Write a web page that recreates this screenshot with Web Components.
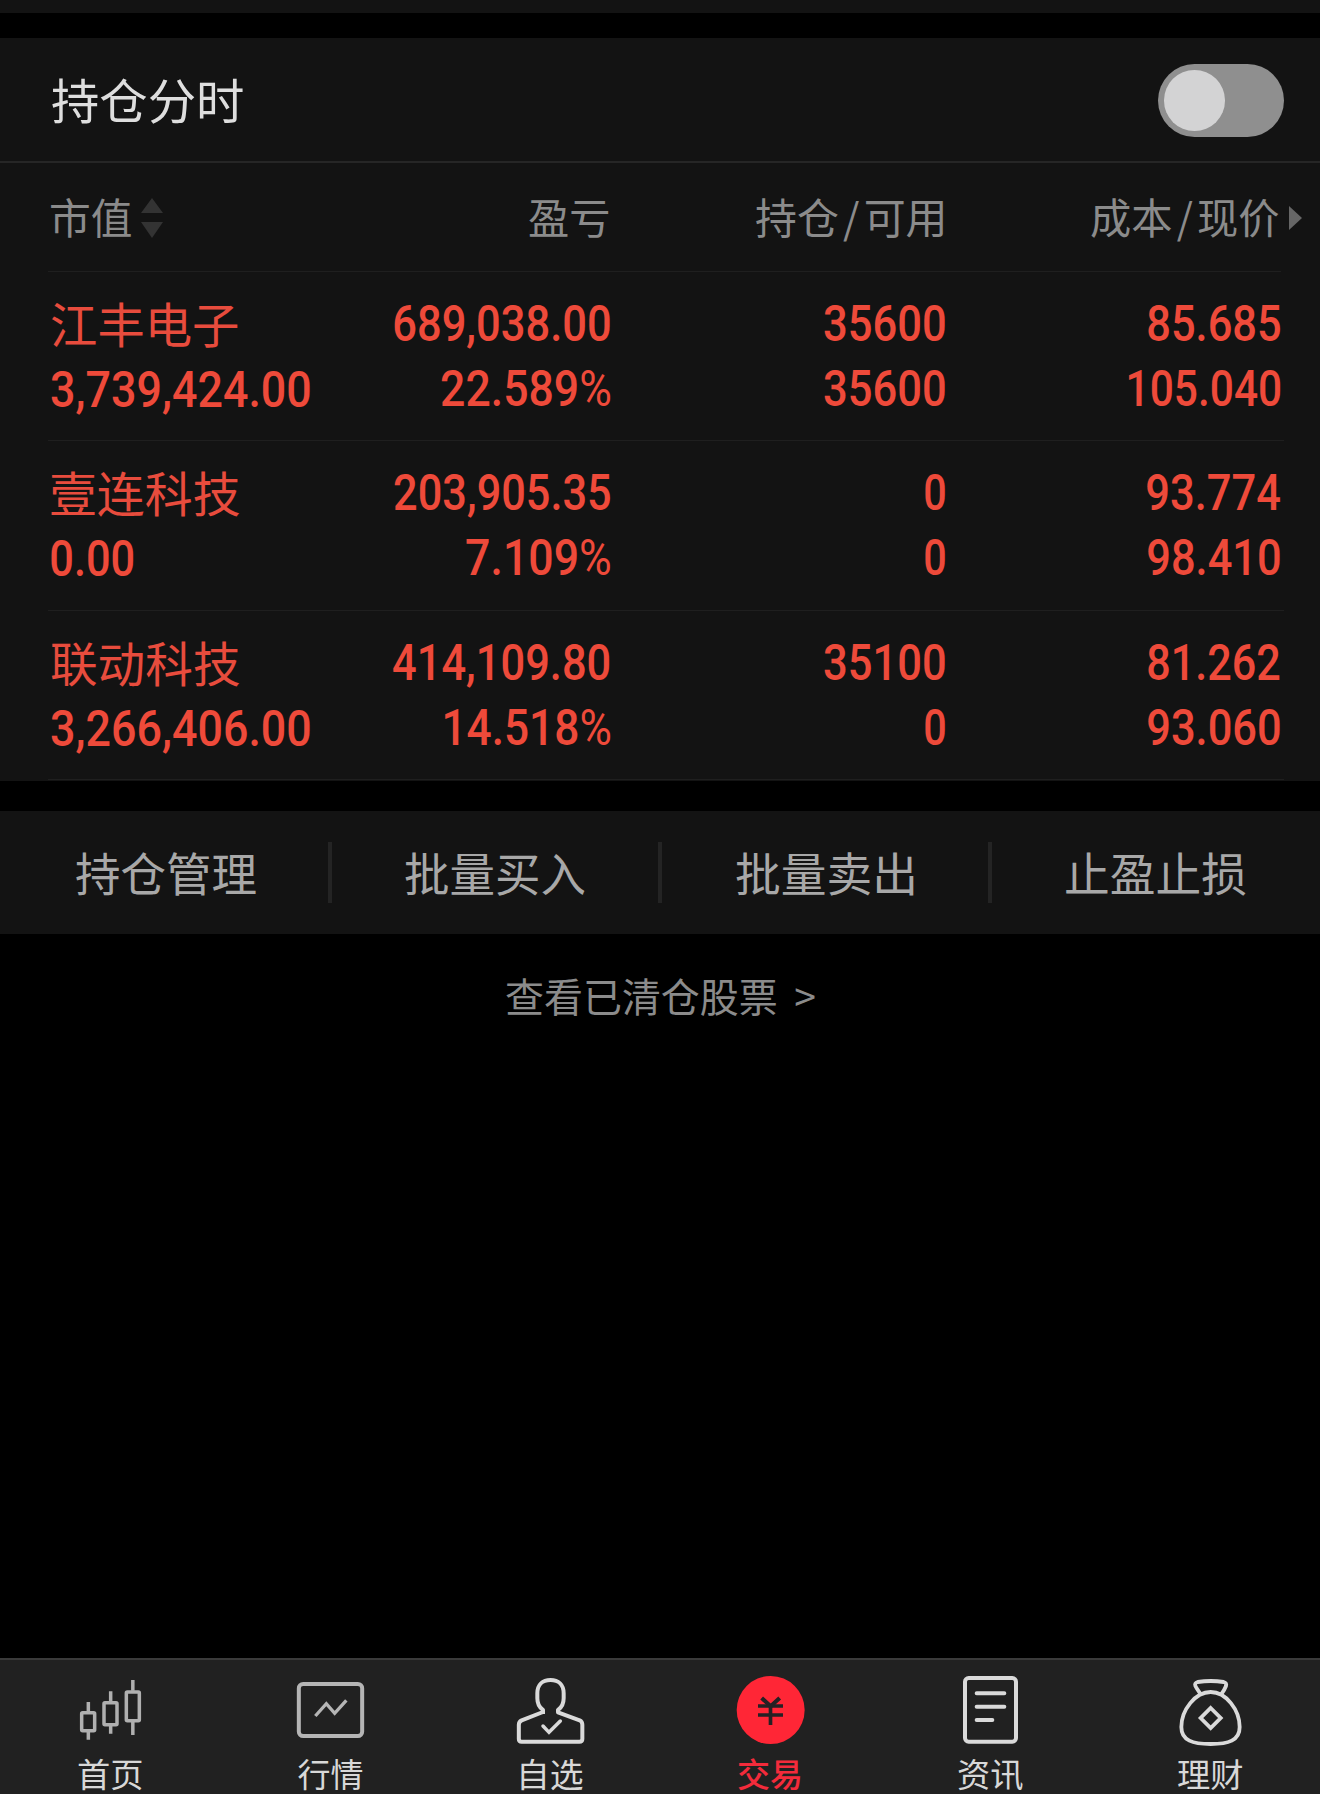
<!DOCTYPE html>
<html lang="zh-CN">
<head>
<meta charset="utf-8">
<title>持仓</title>
<style>
  html, body { margin: 0; background: #000; }
  body { width: 1320px; height: 1794px; overflow: hidden; }
</style>
</head>
<body>
<trade-page></trade-page>

<script>
const CJK = '"Noto Sans CJK SC", sans-serif';

/* One line of text whose drawn glyphs span exactly `w` pixels. */
class FitText extends HTMLElement {
  connectedCallback() {
    const w = parseFloat(this.getAttribute('w'));
    const text = this.getAttribute('text');
    const root = this.attachShadow({ mode: 'open' });
    root.innerHTML = `<style>
      :host { display: block; width: ${w}px; white-space: pre; flex: none; }
      .line { display: inline-block; transform-origin: 0 50%; }
      .slash { margin: 0 0.1em; }
      .more { margin-left: 0.2em; }
      .pct { font-weight: 400; }
    </style><span class="line"></span>`;
    const line = root.querySelector('.line');
    const marks = { '/': 'slash', '>': 'more', '%': 'pct' };
    for (const part of text.split(/([/>%])/).filter(Boolean)) {
      if (marks[part]) {
        const s = document.createElement('span');
        s.className = marks[part];
        s.textContent = part;
        line.append(s);
      } else line.append(part);
    }
    const cs = getComputedStyle(this);
    const ctx = document.createElement('canvas').getContext('2d');
    const measure = ch => {
      ctx.font = `${ch === '%' ? 400 : cs.fontWeight} ${cs.fontSize} ${cs.fontFamily}`;
      return ctx.measureText(ch);
    };
    const first = measure(text[0]), last = measure(text[text.length - 1]);
    const left = -first.actualBoundingBoxLeft;
    const right = last.width - last.actualBoundingBoxRight;
    const k = w / (line.getBoundingClientRect().width - left - right);
    line.style.transform = `translateX(${-left * k}px) scaleX(${k})`;
  }
}

class ToggleSwitch extends HTMLElement {
  connectedCallback() {
    this.attachShadow({ mode: 'open' }).innerHTML = `<style>
      :host { display: flex; align-items: center; box-sizing: border-box; width: 126px; height: 73px;
        padding-left: 6px; border-radius: 37px; background: #8f8f8f; }
      i { display: block; width: 61.5px; height: 61px; border-radius: 50%; background: #d3d3d4; }
    </style><i></i>`;
  }
}

class PositionHeader extends HTMLElement {
  connectedCallback() {
    this.attachShadow({ mode: 'open' }).innerHTML = `<style>
      :host { display: grid; grid-template-columns: 200px 358px 333.5px 336.5px 1fr; box-sizing: border-box;
        height: 109px; padding-left: 51px; align-items: center; color: #8b8b8b;
        font: 400 41.5px/60px ${CJK}; }
      div { display: flex; justify-content: flex-end; align-items: center; padding-bottom: 4px; }
      .first { justify-content: flex-start; gap: 10px; }
      svg { display: block; margin-top: 5px; }
      .more { justify-content: flex-start; padding-left: 10px; }
    </style>
    <div class="first"><fit-text w="80" text="市值"></fit-text>
      <svg width="22" height="40" viewBox="0 0 22 40" fill="#333"><path d="M11 0L22 15H0zM11 40L0 24H22z"/></svg></div>
    <div><fit-text w="80" text="盈亏"></fit-text></div>
    <div><fit-text w="187" text="持仓/可用"></fit-text></div>
    <div><fit-text w="188" text="成本/现价"></fit-text></div>
    <div class="more"><svg width="13" height="24" viewBox="0 0 13 24" fill="#666"><path d="M0 0L13 12L0 24z"/></svg></div>`;
  }
}

class PositionRow extends HTMLElement {
  connectedCallback() {
    const cells = this.getAttribute('cells').split(';').map(c => c.split('|'));
    const fit = ([text, w, cls]) => `<fit-text class="${cls || ''}" w="${w}" text="${text}"></fit-text>`;
    this.attachShadow({ mode: 'open' }).innerHTML = `<style>
      :host { display: grid; grid-template-columns: 200px 358.5px 335.5px 335px; box-sizing: border-box;
        height: 169.33px; padding: 20px 0 0 51px; color: #ee4a3a;
        font: 500 49.2px/65px Roboto, sans-serif; 
        background: linear-gradient(#1f1f1f, #1f1f1f) 48px 100% / 1236px 1px no-repeat; }
      div { display: flex; flex-direction: column; align-items: flex-end; }
      div:first-of-type { align-items: flex-start; }
      .name { font: 400 47.5px/65px ${CJK}; color: #e84c3d; margin: -2px 0 3px; }
    </style>` + [0, 2, 4, 6].map(i => `<div>${fit(cells[i])}${fit(cells[i + 1])}</div>`).join('');
  }
}

class ActionBar extends HTMLElement {
  connectedCallback() {
    this.attachShadow({ mode: 'open' }).innerHTML = `<style>
      :host { display: grid; grid-template-columns: 328px 4px 326px 4px 326px 4px 328px; height: 123px;
        align-items: center; justify-items: center; background: #131313; color: #a8a8a8;
        font: 400 46px/66px ${CJK}; }
      fit-text { margin-bottom: 4px; }
      fit-text:first-of-type { margin-left: 3px; }
      i { width: 4px; height: 61px; background: #242424; }
    </style>
    <fit-text w="180" text="持仓管理"></fit-text><i></i>
    <fit-text w="180" text="批量买入"></fit-text><i></i>
    <fit-text w="178" text="批量卖出"></fit-text><i></i>
    <fit-text w="180" text="止盈止损"></fit-text>`;
  }
}

/* Each drawing uses thirds of a pixel: a 660-unit wide tab is 220px. */
const ICONS = {
  home: `<g stroke="#b0b0b0" stroke-width="10.5"><rect x="245" y="218" width="39" height="54" rx="3"/><path d="M265 186V214M265 276V299"/>
    <rect x="312" y="188" width="39" height="66" rx="3"/><path d="M332 154V184M332 258V281"/>
    <rect x="379" y="156" width="39" height="86" rx="3"/><path d="M398.500 120V152M398.500 246V285"/></g>`,
  market: `<g transform="translate(-660)" stroke="#b5b5b5"><rect x="896.500" y="132" width="190" height="156" rx="13" stroke-width="12"/>
    <path d="M946 228L979 191L1004 220L1039 181" stroke-width="10"/></g>`,
  watch: `<g stroke="#dadada" stroke-width="12" stroke-linejoin="round"><path d="M309 222V210C297 202 292 190 292 175V160C292 134 308 120 331.500 120C355 120 371 134 371 160V175C371 190 366 202 354 210V217L419 241Q427 245 427 254V297Q427 305.500 418 305.500H245Q236.500 305.500 236.500 297V254Q236.500 245 245 241L309 216"/>
    <path d="M309 258L327 277L361 243" stroke-width="10.500" stroke-linecap="round" stroke-linejoin="miter"/></g>`,
  trade: `<circle cx="332" cy="210" r="102" fill="#ff2636"/><g stroke="#242124" stroke-width="11"><path d="M305 174L332 199L359 174" stroke-width="12"/><path d="M294 198H369M294 225H369M331.500 195V255"/></g>`,
  news: `<g stroke="#dadada" stroke-width="12"><rect x="255" y="114" width="153" height="191" rx="11"/><path d="M290 160H373M290 200H373M290 240H337" stroke-linecap="round"/></g>`,
  wealth: `<g transform="translate(-660)" stroke="#dadada" stroke-width="11.500"><path d="M963 163C956 154 950 146 946 137Q943 129 953 126Q992 120 1031 126Q1041 129 1038 138Q1033 151 1023 164"/>
    <path d="M992 156C1038 156 1079 210 1079 261C1079 302 1045 312 992 312C939 312 904 302 904 261C904 210 946 156 992 156Z"/>
    <path d="M992 204L1022 234L992 264L962 234Z"/></g>`
};

class TabItem extends HTMLElement {
  connectedCallback() {
    const active = this.hasAttribute('active');
    this.attachShadow({ mode: 'open' }).innerHTML = `<style>
      :host { display: flex; flex-direction: column; align-items: center; width: 220px;
        font: ${active ? 500 : 400} 33px/44px ${CJK}; color: ${active ? '#f42b3b' : '#d8d8d8'}; }
      svg { display: block; flex: none; margin-bottom: 1px; }
      fit-text { margin-left: ${this.getAttribute('shift') || 0}px; }
    </style>
    <svg width="220" height="90" viewBox="0 60 660 270" fill="none">${ICONS[this.getAttribute('icon')]}</svg>
    <fit-text w="${this.getAttribute('w')}" text="${this.getAttribute('label')}"></fit-text>`;
  }
}

class TabBar extends HTMLElement {
  connectedCallback() {
    this.attachShadow({ mode: 'open' }).innerHTML = `<style>
      :host { display: flex; box-sizing: border-box; height: 136px; border-top: 2px solid #3a3a3a; background: #212121; }
    </style><slot></slot>`;
  }
}

class TradePage extends HTMLElement {
  connectedCallback() {
    this.attachShadow({ mode: 'open' }).innerHTML = `<style>
      :host { display: flex; flex-direction: column; width: 1320px; height: 1794px; background: #000; }
      .strip { height: 13px; background: #131313; margin-bottom: 25px; }
      .holdings { height: 743px; background: #131313; margin-bottom: 30px; }
      .head { display: flex; justify-content: space-between; align-items: center; box-sizing: border-box;
        height: 125px; padding: 0 36.5px 0 51.5px; border-bottom: 2px solid #262626; color: #dedede;
        font: 400 48px/70px ${CJK}; }
      .head fit-text { margin-bottom: 4px; }
      toggle-switch { margin-top: 2px; }
      position-header { background: linear-gradient(#1f1f1f, #1f1f1f) 48px 100% / 1233px 1px no-repeat; }
      .cleared { display: flex; justify-content: center; padding-top: 33px; color: #8b8b8b;
        font: 400 39.5px/56px ${CJK}; }
      tab-bar { margin-top: auto; }
    </style>
    <div class="strip"></div>
    <section class="holdings">
      <div class="head"><fit-text w="191.5" text="持仓分时"></fit-text><toggle-switch></toggle-switch></div>
      <position-header></position-header>
      <position-row cells="江丰电子|187|name;3,739,424.00|259;689,038.00|216;22.589%|169;35600|121;35600|121;85.685|132;105.040|151.500"></position-row>
      <position-row cells="壹连科技|188|name;0.00|82.500;203,905.35|216;7.109%|144;0|20.200;0|20.200;93.774|133;98.410|132"></position-row>
      <position-row cells="联动科技|188|name;3,266,406.00|259;414,109.80|216.500;14.518%|165;35100|121;0|20.200;81.262|132;93.060|132"></position-row>
    </section>
    <action-bar></action-bar>
    <div class="cleared"><fit-text w="309" text="查看已清仓股票 &gt;"></fit-text></div>
    <tab-bar>
      <tab-item icon="home" w="63.500" label="首页"></tab-item>
      <tab-item icon="market" w="65" label="行情"></tab-item>
      <tab-item icon="watch" w="61.500" label="自选" shift="4"></tab-item>
      <tab-item icon="trade" w="62" label="交易" shift="-2" active></tab-item>
      <tab-item icon="news" w="64.500" label="资讯" shift="1"></tab-item>
      <tab-item icon="wealth" w="64.500" label="理财"></tab-item>
    </tab-bar>`;
  }
}

customElements.define('fit-text', FitText);
customElements.define('toggle-switch', ToggleSwitch);
customElements.define('position-header', PositionHeader);
customElements.define('position-row', PositionRow);
customElements.define('action-bar', ActionBar);
customElements.define('tab-item', TabItem);
customElements.define('tab-bar', TabBar);
customElements.define('trade-page', TradePage);
</script>
</body>
</html>
